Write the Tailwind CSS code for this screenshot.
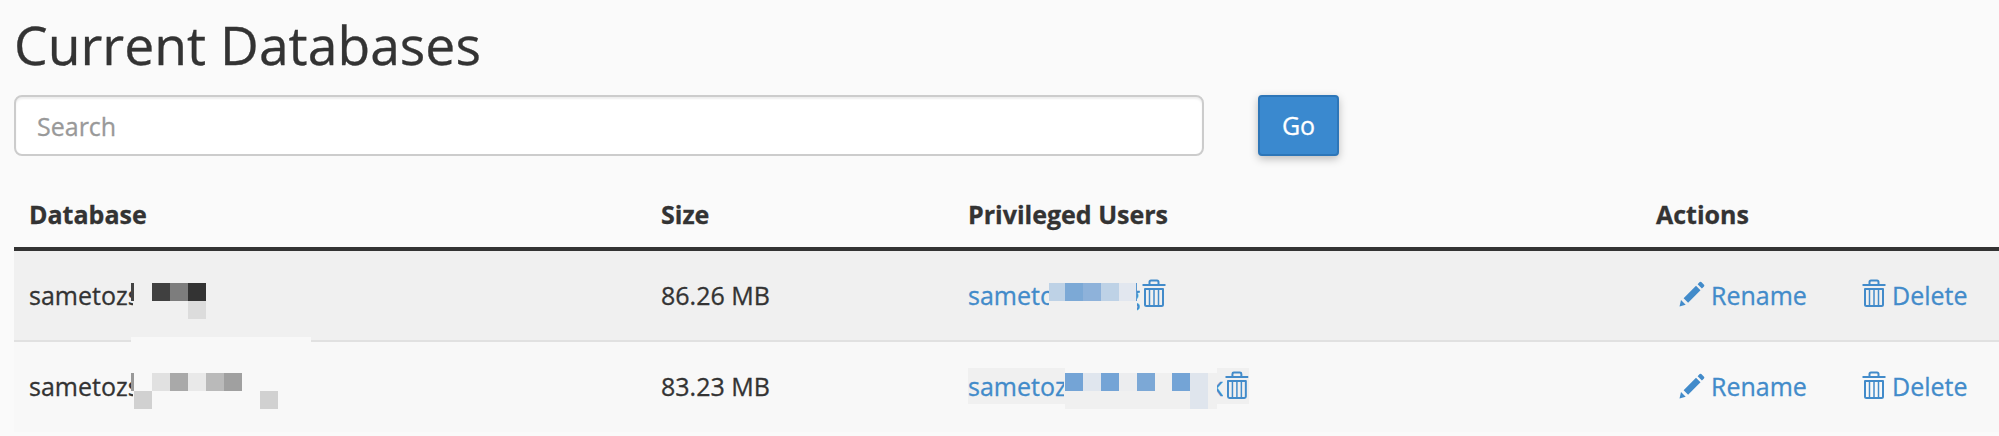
<!DOCTYPE html>
<html lang="en">
<head>
  <meta charset="UTF-8">
  <meta name="viewport" content="width=device-width, initial-scale=1.0">
  <title>Current Databases</title>
  <!-- Tailwind CSS -->
  <script src="https://cdn.jsdelivr.net/npm/@tailwindcss/browser@4"></script>
</head>
<body class="bg-[#fafafa] h-[436px] overflow-hidden font-['Open_Sans',sans-serif] text-[25px] leading-9 text-[#333] [-webkit-text-stroke:0.3px]">

<!-- Icons -->
<svg class="hidden">
  <symbol id="trash" viewBox="0 0 24 28">
    <path fill="none" stroke="currentColor" stroke-width="2" stroke-linejoin="round" d="M0.5 6H23.5M7.5 5.5V3Q7.5 1.5 9 1.5H15Q16.5 1.5 16.5 3V5.5M3 10H21V25.5Q21 27 19.5 27H4.5Q3 27 3 25.5Z" />
    <path fill="none" stroke="currentColor" stroke-width="1.5" d="M7.5 10V27M12 10V27M16.5 10V27" />
  </symbol>
  <symbol id="pencil" viewBox="0 0 26 26">
    <path fill="currentColor" d="M0.5 25.5L2 19L6.7 23.7ZM4.6 17.2L17 4.8L21.5 9.3L9.1 21.7ZM18.6 3.2L20.7 1.1Q21.5 0.4 22.3 1.1L25 3.8Q25.8 4.6 25 5.4L22.9 7.5Z" />
  </symbol>
</svg>

<main class="w-[1999px] h-full pl-[14px] border-l border-[#f6f6f6] -ml-px">
  <h1 class="pt-[7px] h-[95px] text-[53.5px] leading-[76px]">Current Databases</h1>

  <!-- Search -->
  <form class="flex h-[61px]">
    <input type="text" placeholder="Search" class="w-[1190px] px-[21px] pt-px bg-white border-2 border-[#ccc] rounded-lg shadow-[inset_0_2px_2px_rgba(0,0,0,0.07)] placeholder:text-[#999] focus:outline-none">
    <button type="button" class="ml-[54px] w-[81px] pb-px bg-[#3a89cf] text-white border-2 border-[#2d76b8] rounded shadow-[0_3px_9px_rgba(0,0,0,0.25)]">Go</button>
  </form>

  <!-- Databases -->
  <table class="mt-[27px] w-[1985px] table-fixed border-separate border-spacing-0 text-left">
    <thead>
      <tr class="h-[68px]">
        <th class="w-[632px] p-0 pl-[15px] pb-[2px] border-b-4 border-[#333]">Database</th>
        <th class="w-[307px] p-0 pl-[15px] pb-[2px] border-b-4 border-[#333]">Size</th>
        <th class="w-[688px] p-0 pl-[15px] pb-[2px] border-b-4 border-[#333]">Privileged Users</th>
        <th class="p-0 pl-[15px] pb-[2px] border-b-4 border-[#333]">Actions</th>
      </tr>
    </thead>
    <tbody>
      <tr class="h-[89px] bg-[#f0f0f0]">
        <td class="relative p-0 pl-[15px] pb-[2px]">
          <div class="w-[104px] overflow-hidden whitespace-nowrap">sametozs</div>
          <svg class="absolute left-0 top-0 w-[320px] h-[92px]" shape-rendering="crispEdges">
            <rect x="117" y="32" width="3" height="18" fill="#444" />
            <rect x="138" y="32" width="18" height="18" fill="#404040" />
            <rect x="156" y="32" width="18" height="18" fill="#7d7d7d" />
            <rect x="174" y="32" width="18" height="18" fill="#333" />
            <rect x="174" y="50" width="18" height="18" fill="#dcdcdc" />
          </svg>
        </td>
        <td class="p-0 pl-[15px] pb-[2px]">86.26 MB</td>
        <td class="relative p-0 pl-[15px] pb-[2px] text-[#428bca]">
          <div class="flex items-center">
            <div class="w-[81px] overflow-hidden whitespace-nowrap">sametoz</div>
            <div class="ml-[88px] w-[3px] flex justify-end overflow-hidden">g</div>
            <svg class="ml-[2px] mb-[3px] w-6 h-7"><use href="#trash" /></svg>
          </div>
          <svg class="absolute left-[96px] top-0 w-[100px] h-[80px]" shape-rendering="crispEdges">
            <rect x="0" y="32" width="16" height="18" fill="#bed2e6" />
            <rect x="16" y="32" width="18" height="18" fill="#7ca9d6" />
            <rect x="34" y="32" width="18" height="18" fill="#8eb2da" />
            <rect x="52" y="32" width="18" height="18" fill="#bed2e6" />
            <rect x="70" y="32" width="17" height="18" fill="#e2e7ef" />
            <rect x="87" y="32" width="1" height="18" fill="#5b98d0" />
          </svg>
        </td>
        <td class="p-0 pl-[38px] pb-[2px] text-[#428bca]">
          <div class="flex items-center">
            <svg class="mb-px w-[26px] h-[26px]"><use href="#pencil" /></svg>
            <a href="#" class="ml-[6px] w-[98px]">Rename</a>
            <svg class="ml-[53px] mb-[3px] w-6 h-7"><use href="#trash" /></svg>
            <a href="#" class="ml-[6px]">Delete</a>
          </div>
        </td>
      </tr>
      <tr class="h-[92px] bg-[#f8f8f8]">
        <td class="relative p-0 pl-[15px] pb-[2px] border-t-2 border-[#e1e1e1]">
          <div class="w-[104px] overflow-hidden whitespace-nowrap">sametozs</div>
          <svg class="absolute left-0 -top-[5px] w-[320px] h-[90px]" shape-rendering="crispEdges">
            <rect x="117" y="0" width="180" height="5" fill="#f8f8f8" />
            <rect x="117" y="36" width="3" height="18" fill="#999" />
            <rect x="138" y="36" width="18" height="18" fill="#e1e1e1" />
            <rect x="156" y="36" width="18" height="18" fill="#a9a9a9" />
            <rect x="174" y="36" width="18" height="18" fill="#e9e9e9" />
            <rect x="192" y="36" width="18" height="18" fill="#bababa" />
            <rect x="210" y="36" width="18" height="18" fill="#a0a0a0" />
            <rect x="120" y="54" width="18" height="18" fill="#d1d1d1" />
            <rect x="246" y="54" width="18" height="18" fill="#d1d1d1" />
          </svg>
        </td>
        <td class="p-0 pl-[15px] pb-[2px] border-t-2 border-[#e1e1e1]">83.23 MB</td>
        <td class="relative p-0 pl-[15px] pb-[2px] border-t-2 border-[#e1e1e1] text-[#428bca]">
          <div class="w-[281px] flex items-center bg-[#f0f0f0]">
            <div class="w-[97px] overflow-hidden whitespace-nowrap">sametoz</div>
            <div class="ml-[152px] w-[7px] flex justify-end overflow-hidden">k</div>
            <svg class="ml-[2px] mb-[3px] w-6 h-7"><use href="#trash" /></svg>
          </div>
          <svg class="absolute left-[112px] top-[26px] w-[152px] h-[41px]" shape-rendering="crispEdges">
            <rect x="0" y="0" width="152" height="5" fill="#f8f8f8" />
            <rect x="0" y="5" width="152" height="36" fill="#f0f0f0" />
            <rect x="0" y="5" width="18" height="18" fill="#74a4d6" />
            <rect x="18" y="5" width="18" height="18" fill="#e0e6ee" />
            <rect x="36" y="5" width="18" height="18" fill="#74a4d6" />
            <rect x="54" y="5" width="18" height="18" fill="#ecedef" />
            <rect x="72" y="5" width="18" height="18" fill="#7ca8d6" />
            <rect x="107" y="5" width="18" height="18" fill="#74a4d6" />
            <rect x="125" y="5" width="18" height="36" fill="#dfe5ed" />
          </svg>
        </td>
        <td class="p-0 pl-[38px] pb-[2px] border-t-2 border-[#e1e1e1] text-[#428bca]">
          <div class="flex items-center">
            <svg class="mb-px w-[26px] h-[26px]"><use href="#pencil" /></svg>
            <a href="#" class="ml-[6px] w-[98px]">Rename</a>
            <svg class="ml-[53px] mb-[3px] w-6 h-7"><use href="#trash" /></svg>
            <a href="#" class="ml-[6px]">Delete</a>
          </div>
        </td>
      </tr>
    </tbody>
  </table>
</main>
</body>
</html>
